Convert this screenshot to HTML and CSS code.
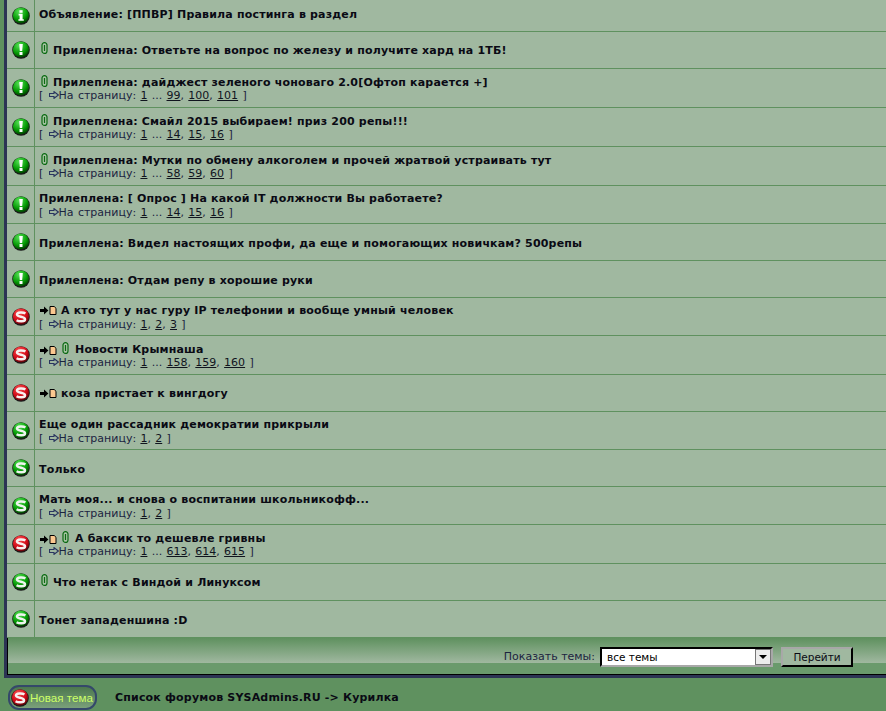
FILE: index.html
```html
<!DOCTYPE html>
<html lang="ru">
<head>
    <meta charset="UTF-8">
    <title>SYSAdmins.RU - Курилка</title>
    <link rel="stylesheet" href="styles.css">
</head>
<body>
    <svg class="defs" width="0" height="0">
        <defs>
            <radialGradient id="ballGreen" cx="38%" cy="25%" r="80%">
                <stop offset="0" stop-color="#55e055"/>
                <stop offset="0.62" stop-color="#049a04"/>
                <stop offset="1" stop-color="#012e01"/>
            </radialGradient>
            <radialGradient id="ballRed" cx="38%" cy="25%" r="80%">
                <stop offset="0" stop-color="#f85050"/>
                <stop offset="0.62" stop-color="#d20a18"/>
                <stop offset="1" stop-color="#4c0206"/>
            </radialGradient>
            <symbol id="ball-i" viewBox="0 0 18 18">
                <circle cx="9" cy="9" r="8.8" fill="#1a1a1a"/>
                <circle cx="9" cy="8.5" r="8.1" fill="url(#ballGreen)"/>
                <rect x="7.4" y="3.2" width="3.2" height="2.6" fill="#fff"/>
                <path d="M6.600 6.800h4v5.400h1.200v1.600H6.400v-1.600h1.200V8.400h-1z" fill="#fff"/>
            </symbol>
            <symbol id="ball-e" viewBox="0 0 18 18">
                <circle cx="9" cy="9" r="8.8" fill="#1a1a1a"/>
                <circle cx="9" cy="8.5" r="8.1" fill="url(#ballGreen)"/>
                <path d="M7.200 3h3.600l-.6 7H7.800z" fill="#fff"/>
                <rect x="7.500" y="11" width="3" height="3" fill="#fff"/>
            </symbol>
            <symbol id="ball-s" viewBox="0 0 18 18">
                <circle cx="9" cy="9" r="8.8" fill="#1a1a1a"/>
                <circle cx="9" cy="8.5" r="8.1" fill="url(#ballGreen)"/>
                <path d="M13.400 5.600C11.600 4.200 5 4 5 6.600c0 2.800 8 1.600 8 4.600 0 2.800-6 2.600-8.400 1" fill="none" stroke="#eef4ee" stroke-width="2.500"/>
            </symbol>
            <symbol id="ball-hot" viewBox="0 0 18 18">
                <circle cx="9" cy="9" r="8.8" fill="#1a1a1a"/>
                <circle cx="9" cy="8.5" r="8.1" fill="url(#ballRed)"/>
                <path d="M13.400 5.600C11.600 4.200 5 4 5 6.600c0 2.800 8 1.600 8 4.600 0 2.800-6 2.600-8.400 1" fill="none" stroke="#f8f0f0" stroke-width="2.500"/>
            </symbol>
            <symbol id="clip" viewBox="0 0 7 12">
                <rect x="1" y=".6" width="5" height="10.800" rx="2.500" fill="#a8c4a4" stroke="#0a6a12" stroke-width="1.200"/>
                <path d="M3.500 3v6" stroke="#0a6a12" stroke-width="1.200"/>
            </symbol>
            <symbol id="arrow" viewBox="0 0 10 8">
                <path d="M.5 2.500h4.500V.6L9.300 4 5 7.400V5.500H.5z" fill="none" stroke="#2a3560" stroke-width="1.100"/>
            </symbol>
            <symbol id="newest" viewBox="0 0 17 9">
                <path d="M0 3h4V.4L8.400 4.500 4 8.600V6H0z" fill="#000"/>
                <path d="M10 .5h4.200l1.800 1.800v6.200h-6z" fill="#fbc890" stroke="#000" stroke-width="1"/>
            </symbol>
        </defs>
    </svg>

    <div class="forum-box">
        <div class="topic topic-first">
            <div class="topic-icon"><svg class="ball"><use href="#ball-i"/></svg></div>
            <div class="topic-main"><a class="topic-title">Объявление: [ППВР] Правила постинга в раздел</a></div>
        </div>
        <div class="topic">
            <div class="topic-icon"><svg class="ball"><use href="#ball-e"/></svg></div>
            <div class="topic-main"><div class="title-line"><svg class="clip"><use href="#clip"/></svg><a class="topic-title">Прилеплена: Ответьте на вопрос по железу и получите хард на 1ТБ!</a></div></div>
        </div>
        <div class="topic topic-clip">
            <div class="topic-icon"><svg class="ball"><use href="#ball-e"/></svg></div>
            <div class="topic-main">
                <div class="title-line"><svg class="clip"><use href="#clip"/></svg><a class="topic-title">Прилеплена: дайджест зеленого чоноваго 2.0[Офтоп карается +]</a></div>
                <div class="pages">[ <svg class="arrow"><use href="#arrow"/></svg>На страницу: <a>1</a> ... <a>99</a>, <a>100</a>, <a>101</a> ]</div>
            </div>
        </div>
        <div class="topic topic-clip">
            <div class="topic-icon"><svg class="ball"><use href="#ball-e"/></svg></div>
            <div class="topic-main">
                <div class="title-line"><svg class="clip"><use href="#clip"/></svg><a class="topic-title">Прилеплена: Смайл 2015 выбираем! приз 200 репы!!!</a></div>
                <div class="pages">[ <svg class="arrow"><use href="#arrow"/></svg>На страницу: <a>1</a> ... <a>14</a>, <a>15</a>, <a>16</a> ]</div>
            </div>
        </div>
        <div class="topic topic-clip">
            <div class="topic-icon"><svg class="ball"><use href="#ball-e"/></svg></div>
            <div class="topic-main">
                <div class="title-line"><svg class="clip"><use href="#clip"/></svg><a class="topic-title">Прилеплена: Мутки по обмену алкоголем и прочей жратвой устраивать тут</a></div>
                <div class="pages">[ <svg class="arrow"><use href="#arrow"/></svg>На страницу: <a>1</a> ... <a>58</a>, <a>59</a>, <a>60</a> ]</div>
            </div>
        </div>
        <div class="topic topic-pages">
            <div class="topic-icon"><svg class="ball"><use href="#ball-e"/></svg></div>
            <div class="topic-main">
                <div class="title-line"><a class="topic-title">Прилеплена: [ Опрос ] На какой IT должности Вы работаете?</a></div>
                <div class="pages">[ <svg class="arrow"><use href="#arrow"/></svg>На страницу: <a>1</a> ... <a>14</a>, <a>15</a>, <a>16</a> ]</div>
            </div>
        </div>
        <div class="topic">
            <div class="topic-icon"><svg class="ball"><use href="#ball-e"/></svg></div>
            <div class="topic-main"><a class="topic-title">Прилеплена: Видел настоящих профи, да еще и помогающих новичкам? 500репы</a></div>
        </div>
        <div class="topic">
            <div class="topic-icon"><svg class="ball"><use href="#ball-e"/></svg></div>
            <div class="topic-main"><a class="topic-title">Прилеплена: Отдам репу в хорошие руки</a></div>
        </div>
        <div class="topic topic-pages">
            <div class="topic-icon"><svg class="ball"><use href="#ball-hot"/></svg></div>
            <div class="topic-main">
                <div class="title-line"><svg class="newest"><use href="#newest"/></svg><a class="topic-title">А кто тут у нас гуру IP телефонии и вообще умный человек</a></div>
                <div class="pages">[ <svg class="arrow"><use href="#arrow"/></svg>На страницу: <a>1</a>, <a>2</a>, <a>3</a> ]</div>
            </div>
        </div>
        <div class="topic topic-clip">
            <div class="topic-icon"><svg class="ball"><use href="#ball-hot"/></svg></div>
            <div class="topic-main">
                <div class="title-line"><svg class="newest"><use href="#newest"/></svg><svg class="clip"><use href="#clip"/></svg><a class="topic-title">Новости Крымнаша</a></div>
                <div class="pages">[ <svg class="arrow"><use href="#arrow"/></svg>На страницу: <a>1</a> ... <a>158</a>, <a>159</a>, <a>160</a> ]</div>
            </div>
        </div>
        <div class="topic">
            <div class="topic-icon"><svg class="ball"><use href="#ball-hot"/></svg></div>
            <div class="topic-main"><div class="title-line"><svg class="newest"><use href="#newest"/></svg><a class="topic-title">коза пристает к вингдогу</a></div></div>
        </div>
        <div class="topic topic-pages">
            <div class="topic-icon"><svg class="ball"><use href="#ball-s"/></svg></div>
            <div class="topic-main">
                <div class="title-line"><a class="topic-title">Еще один рассадник демократии прикрыли</a></div>
                <div class="pages">[ <svg class="arrow"><use href="#arrow"/></svg>На страницу: <a>1</a>, <a>2</a> ]</div>
            </div>
        </div>
        <div class="topic">
            <div class="topic-icon"><svg class="ball"><use href="#ball-s"/></svg></div>
            <div class="topic-main"><a class="topic-title">Только</a></div>
        </div>
        <div class="topic topic-pages">
            <div class="topic-icon"><svg class="ball"><use href="#ball-s"/></svg></div>
            <div class="topic-main">
                <div class="title-line"><a class="topic-title">Мать моя... и снова о воспитании школьникофф...</a></div>
                <div class="pages">[ <svg class="arrow"><use href="#arrow"/></svg>На страницу: <a>1</a>, <a>2</a> ]</div>
            </div>
        </div>
        <div class="topic topic-clip">
            <div class="topic-icon"><svg class="ball"><use href="#ball-hot"/></svg></div>
            <div class="topic-main">
                <div class="title-line"><svg class="newest"><use href="#newest"/></svg><svg class="clip"><use href="#clip"/></svg><a class="topic-title">А баксик то дешевле гривны</a></div>
                <div class="pages">[ <svg class="arrow"><use href="#arrow"/></svg>На страницу: <a>1</a> ... <a>613</a>, <a>614</a>, <a>615</a> ]</div>
            </div>
        </div>
        <div class="topic">
            <div class="topic-icon"><svg class="ball"><use href="#ball-s"/></svg></div>
            <div class="topic-main"><div class="title-line"><svg class="clip"><use href="#clip"/></svg><a class="topic-title">Что нетак с Виндой и Линуксом</a></div></div>
        </div>
        <div class="topic">
            <div class="topic-icon"><svg class="ball"><use href="#ball-s"/></svg></div>
            <div class="topic-main"><a class="topic-title">Тонет западеншина :D</a></div>
        </div>

        <div class="filter-bar">
            <span class="filter-label">Показать темы:</span>
            <div class="fake-select">
                <span class="select-value">все темы</span>
                <span class="select-btn"><i class="select-caret"></i></span>
            </div>
            <button class="go-btn">Перейти</button>
        </div>
    </div>

    <div class="bottom-bar">
        <a class="new-topic"><svg class="ball"><use href="#ball-hot"/></svg>Новая тема</a>
        <span class="breadcrumb">Список форумов SYSAdmins.RU -&gt; Курилка</span>
    </div>
</body>
</html>
```
FILE: styles.css
```css
html, body {
    height: 100%;
}

body {
    margin: 0;
    padding: 0 0 0 4px;
    background: #5f915f;
    color: #000;
    font-family: 'DejaVu Sans', Verdana, sans-serif;
    font-size: 11px;
    overflow: hidden;
}

.defs {
    position: absolute;
}

/* Topic list */
.forum-box {
    border-left: 3px solid #2c3454;
    border-bottom: 3px solid #2c3454;
}

.topic {
    display: flex;
    height: 37px;
    box-sizing: border-box;
    border-bottom: 1px solid #5f915f;
    background: #a0b8a0;
}

.topic-first {
    height: 32px;
}

.topic-pages {
    height: 38px;
}

.topic-clip {
    height: 39px;
}

.topic-icon {
    width: 27px;
    flex: none;
    display: flex;
    align-items: center;
    justify-content: center;
    border-right: 1px solid #5f915f;
}

.ball {
    width: 18px;
    height: 18px;
}

.topic-main {
    flex: 1;
    padding: 1px 0 0 4px;
    display: flex;
    flex-direction: column;
    justify-content: center;
}

.topic-main > .topic-title {
    margin-top: 3px;
}

.topic-first .topic-main > .topic-title {
    margin-top: -2px;
}

.topic-title {
    font-weight: bold;
    font-size: 11px;
    line-height: 14px;
    letter-spacing: 0.18px;
    color: #0a0a14;
    white-space: nowrap;
}

.title-line {
    display: flex;
    align-items: center;
    height: 14px;
}

.topic-clip .title-line {
    margin-top: 1px;
}

.clip {
    width: 7px;
    height: 12px;
    margin: -5px 5px 0 2px;
    flex: none;
}

.newest {
    width: 17px;
    height: 9px;
    margin: 0 4px 0 1px;
    flex: none;
}

.newest + .clip {
    margin: -5px 6px 0 1px;
}

.pages {
    margin-top: 1px;
    font-size: 11px;
    line-height: 12px;
    word-spacing: 0.8px;
    color: #1c2440;
    white-space: nowrap;
}

.topic-clip .pages {
    margin-top: 0;
}

.pages a {
    text-decoration: underline;
    color: #10141e;
}

.arrow {
    width: 10px;
    height: 8px;
    margin-left: 1px;
}

/* Filter row */
.filter-bar {
    height: 37px;
    box-sizing: border-box;
    padding: 9px 33px 0 0;
    border-left: 1px solid #000;
    border-bottom: 1px solid #000;
    display: flex;
    justify-content: flex-end;
    align-items: flex-start;
    font-size: 11px;
    background: linear-gradient(#5f915f 0, #a0b8a0 25px, #6a9a6c 25px, #6a9a6c 100%);
}

.filter-label {
    line-height: 20px;
    margin-right: 5px;
    color: #1c2440;
}

.fake-select {
    width: 173px;
    height: 20px;
    box-sizing: border-box;
    border: 2px solid;
    border-color: #000 #a8a8a8 #a8a8a8 #000;
    background: #fff;
    display: flex;
    justify-content: space-between;
    font-size: 10.5px;
    line-height: 16px;
}

.select-value {
    padding-left: 5px;
}

.select-btn {
    width: 16px;
    border: 1px solid #777;
    box-sizing: border-box;
    background: #ececec;
    display: flex;
    align-items: center;
    justify-content: center;
}

.select-caret {
    border: 4px solid transparent;
    border-top-color: #000;
    border-bottom: 0;
}

.go-btn {
    width: 72px;
    height: 20px;
    margin-left: 8px;
    padding: 0;
    border: 2px solid;
    border-color: #a8a8a8 #000 #000 #a8a8a8;
    background: #a0b8a0;
    color: #0a0a14;
    font-family: inherit;
    font-size: 10.5px;
}

/* Bottom line */
.bottom-bar {
    display: flex;
    align-items: center;
    margin-left: -4px;
    padding: 7px 0 0 8px;
}

.new-topic {
    width: 89px;
    height: 25px;
    box-sizing: border-box;
    padding-left: 1px;
    border: 2px solid #34486a;
    border-radius: 11px;
    background: linear-gradient(#4c784e, #7aa07a);
    color: #ccff66;
    display: flex;
    align-items: center;
    gap: 1px;
    font-family: 'Liberation Sans', Arial, sans-serif;
    font-size: 11.6px;
    white-space: nowrap;
}

.breadcrumb {
    margin-left: 18px;
    font-weight: bold;
    letter-spacing: 0.18px;
    color: #0a0a14;
}
```
